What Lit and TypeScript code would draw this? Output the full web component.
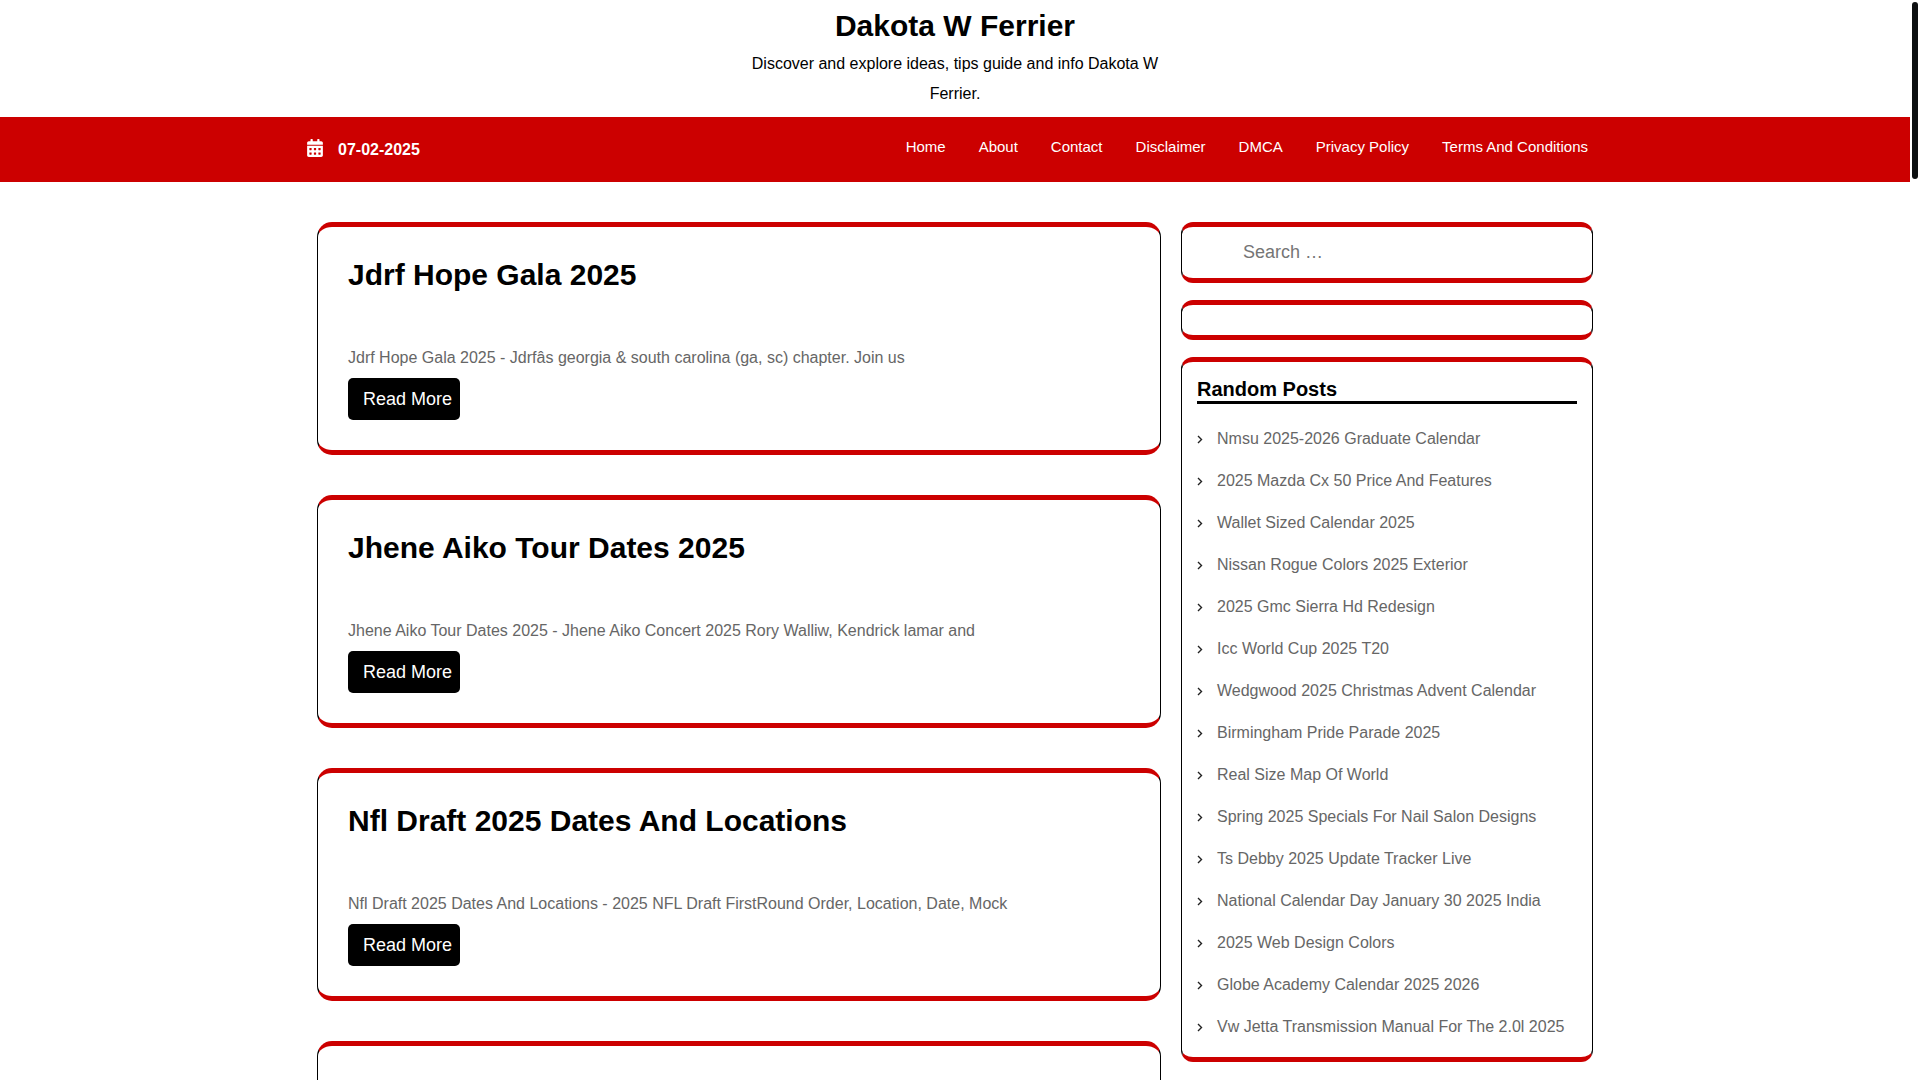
import { LitElement, html, css } from "lit";
import { customElement, property } from "lit/decorators.js";

interface Post {
  title: string;
  excerpt: string;
}

const NAV = ["Home", "About", "Contact", "Disclaimer", "DMCA", "Privacy Policy", "Terms And Conditions"];

const POSTS: Post[] = [
  {
    title: "Jdrf Hope Gala 2025",
    excerpt: "Jdrf Hope Gala 2025 - Jdrfâs georgia & south carolina (ga, sc) chapter. Join us",
  },
  {
    title: "Jhene Aiko Tour Dates 2025",
    excerpt: "Jhene Aiko Tour Dates 2025 - Jhene Aiko Concert 2025 Rory Walliw, Kendrick lamar and",
  },
  {
    title: "Nfl Draft 2025 Dates And Locations",
    excerpt: "Nfl Draft 2025 Dates And Locations - 2025 NFL Draft FirstRound Order, Location, Date, Mock",
  },
];

const RANDOM_POSTS = [
  "Nmsu 2025-2026 Graduate Calendar",
  "2025 Mazda Cx 50 Price And Features",
  "Wallet Sized Calendar 2025",
  "Nissan Rogue Colors 2025 Exterior",
  "2025 Gmc Sierra Hd Redesign",
  "Icc World Cup 2025 T20",
  "Wedgwood 2025 Christmas Advent Calendar",
  "Birmingham Pride Parade 2025",
  "Real Size Map Of World",
  "Spring 2025 Specials For Nail Salon Designs",
  "Ts Debby 2025 Update Tracker Live",
  "National Calendar Day January 30 2025 India",
  "2025 Web Design Colors",
  "Globe Academy Calendar 2025 2026",
  "Vw Jetta Transmission Manual For The 2.0l 2025",
];

@customElement("post-card")
export class PostCard extends LitElement {
  @property({ attribute: false }) post?: Post;

  static styles = css`
    :host {
      display: block;
    }
    .card {
      box-sizing: border-box;
      min-height: 233px;
      padding: 30px;
      border: 1px solid #000;
      border-top: 5px solid #c00;
      border-bottom: 5px solid #c00;
      border-radius: 15px;
      background: #fff;
    }
    .title {
      margin: 0 0 50px;
      font-size: 30px;
      line-height: 36px;
      font-weight: 700;
    }
    .title-link {
      color: #000;
      text-decoration: none;
    }
    .excerpt {
      margin: 0 0 5px;
      color: #666;
      font-size: 16px;
      line-height: 30px;
    }
    .more {
      display: inline-block;
      vertical-align: top;
      padding: 0 8px 0 15px;
      border-radius: 5px;
      background: #000;
      color: #fff;
      font-size: 18px;
      line-height: 42px;
      text-decoration: none;
    }
  `;

  render() {
    const post = this.post;
    return html`<article class="card">
      ${post
        ? html`<h2 class="title"><a class="title-link" href="#">${post.title}</a></h2>
            <p class="excerpt">${post.excerpt}</p>
            <a class="more" href="#">Read More</a>`
        : null}
    </article>`;
  }
}

@customElement("side-widget")
export class SideWidget extends LitElement {
  static styles = css`
    :host {
      display: block;
    }
    .widget {
      padding: 15px;
      border: 1px solid #000;
      border-top: 5px solid #c00;
      border-bottom: 5px solid #c00;
      border-radius: 12px;
      background: #fff;
    }
  `;

  render() {
    return html`<section class="widget"><slot></slot></section>`;
  }
}

@customElement("app-root")
export class AppRoot extends LitElement {
  static styles = css`
    :host {
      display: block;
      position: relative;
      height: 100vh;
      overflow: hidden;
      background: #fff;
      color: #000;
      font-family: "Liberation Sans", Arial, sans-serif;
      font-size: 16px;
    }
    .page {
      height: 100%;
      margin-right: 10px;
      overflow-y: auto;
      scrollbar-width: none;
    }
    .thumb {
      position: absolute;
      top: 2px;
      right: 2px;
      width: 6px;
      height: 177px;
      border-radius: 3px;
      background: #0d1011;
    }
    .header {
      padding: 8px 15px;
      text-align: center;
    }
    .site-title {
      margin: 0 0 5px;
      font-size: 30px;
      line-height: 36px;
      font-weight: 700;
    }
    .site-link {
      color: inherit;
      text-decoration: none;
    }
    .tagline {
      max-width: 433px;
      margin: 0 auto;
      line-height: 30px;
    }
    .bar {
      background: #c00;
      color: #fff;
    }
    .bar-inner {
      display: flex;
      justify-content: space-between;
      align-items: center;
      max-width: 1300px;
      min-height: 65px;
      margin: 0 auto;
    }
    .date {
      display: flex;
      align-items: center;
      gap: 13px;
      font-weight: 700;
      line-height: 30px;
    }
    .calendar {
      display: block;
      width: 20px;
      height: 18px;
      margin-bottom: 3px;
      fill: #fff;
    }
    .menu {
      display: flex;
      flex-wrap: wrap;
      gap: 0 33px;
      margin: 0;
      padding: 0 17px 6px;
      list-style: none;
    }
    .menu-link {
      display: block;
      color: #fff;
      font-size: 15px;
      line-height: 30px;
      text-decoration: none;
    }
    .content {
      display: grid;
      grid-template-columns: minmax(0, 1fr) 412px;
      gap: 20px;
      align-items: start;
      max-width: 1276px;
      margin: 0 auto;
      padding: 40px 0;
    }
    .posts {
      display: flex;
      flex-direction: column;
      gap: 40px;
    }
    .sidebar {
      display: flex;
      flex-direction: column;
      gap: 17px;
    }
    .search {
      display: flex;
    }
    .search-field {
      flex: 1;
      min-width: 0;
      height: 21px;
      margin: 0;
      padding: 0 46px;
      border: 0;
      outline: 0;
      background: transparent;
      color: #000;
      font: 18px/21px "Liberation Sans", Arial, sans-serif;
    }
    .search-field::placeholder {
      color: #757575;
    }
    .widget-title {
      margin: 0 0 20px;
      border-bottom: 3px solid #000;
      font-size: 20px;
      line-height: 24px;
      font-weight: 700;
    }
    .links {
      display: flex;
      flex-direction: column;
      gap: 12px;
      margin: 0;
      padding: 0;
      list-style: none;
    }
    .item {
      display: flex;
      align-items: center;
      gap: 12px;
      line-height: 30px;
    }
    .chevron {
      flex: none;
      width: 8px;
      height: 10px;
      fill: none;
      stroke: #222;
      stroke-width: 1.4;
    }
    .item-link {
      color: #666;
      text-decoration: none;
    }
  `;

  render() {
    return html`
      <div class="page">
        <header>
          <div class="header">
            <h1 class="site-title"><a class="site-link" href="#">Dakota W Ferrier</a></h1>
            <p class="tagline">Discover and explore ideas, tips guide and info Dakota W Ferrier.</p>
          </div>
          <div class="bar">
            <div class="bar-inner">
              <div class="date">
                <svg class="calendar" viewBox="0 0 448 512" aria-hidden="true">
                  <path
                    d="M0 464c0 26.500 21.500 48 48 48h352c26.500 0 48-21.500 48-48V192H0v272zm320-196c0-6.600 5.400-12 12-12h40c6.600 0 12 5.400 12 12v40c0 6.600-5.400 12-12 12h-40c-6.600 0-12-5.400-12-12v-40zm0 128c0-6.600 5.400-12 12-12h40c6.600 0 12 5.400 12 12v40c0 6.600-5.400 12-12 12h-40c-6.600 0-12-5.400-12-12v-40zM192 268c0-6.600 5.400-12 12-12h40c6.600 0 12 5.400 12 12v40c0 6.600-5.400 12-12 12h-40c-6.600 0-12-5.400-12-12v-40zm0 128c0-6.600 5.400-12 12-12h40c6.600 0 12 5.400 12 12v40c0 6.600-5.400 12-12 12h-40c-6.600 0-12-5.400-12-12v-40zM64 268c0-6.600 5.400-12 12-12h40c6.600 0 12 5.400 12 12v40c0 6.600-5.400 12-12 12H76c-6.600 0-12-5.400-12-12v-40zm0 128c0-6.600 5.400-12 12-12h40c6.600 0 12 5.400 12 12v40c0 6.600-5.400 12-12 12H76c-6.600 0-12-5.400-12-12v-40zM400 64h-48V16c0-8.800-7.200-16-16-16h-32c-8.800 0-16 7.200-16 16v48H160V16c0-8.800-7.200-16-16-16h-32c-8.800 0-16 7.200-16 16v48H48C21.500 64 0 85.500 0 112v48h448v-48c0-26.500-21.500-48-48-48z"
                  />
                </svg>
                <span>07-02-2025</span>
              </div>
              <nav aria-label="Primary">
                <ul class="menu">
                  ${NAV.map((label) => html`<li><a class="menu-link" href="#">${label}</a></li>`)}
                </ul>
              </nav>
            </div>
          </div>
        </header>
        <div class="content">
          <main class="posts">
            ${POSTS.map((post) => html`<post-card .post=${post}></post-card>`)}
            <post-card></post-card>
          </main>
          <aside class="sidebar">
            <side-widget>
              <form class="search" role="search" @submit=${(e: Event) => e.preventDefault()}>
                <input class="search-field" type="search" placeholder="Search …" aria-label="Search" />
              </form>
            </side-widget>
            <side-widget></side-widget>
            <side-widget>
              <h3 class="widget-title">Random Posts</h3>
              <ul class="links">
                ${RANDOM_POSTS.map(
                  (label) => html`<li class="item">
                    <svg class="chevron" viewBox="0 0 8 10" aria-hidden="true">
                      <path d="M1 2 L4.500 5.500 L1 9" />
                    </svg>
                    <a class="item-link" href="#">${label}</a>
                  </li>`
                )}
              </ul>
            </side-widget>
          </aside>
        </div>
      </div>
      <div class="thumb"></div>
    `;
  }
}
